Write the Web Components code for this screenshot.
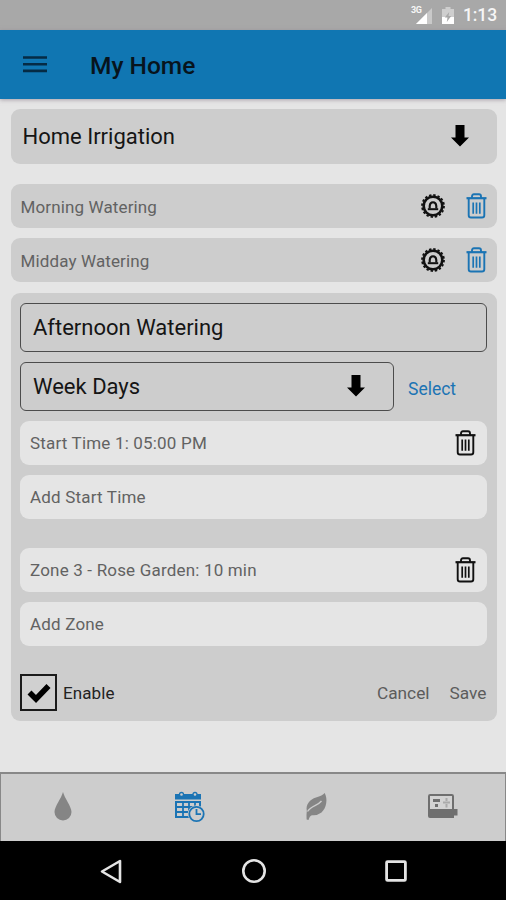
<!DOCTYPE html>
<html lang="en">
<head>
<meta charset="utf-8">
<title>My Home</title>
<style>
html,body{margin:0;height:100%;overflow:hidden}
body{font-family:Roboto,"Liberation Sans",sans-serif;background:#e5e5e5}
</style>
</head>
<body>
<irrigation-app></irrigation-app>
<script>
const define = (name, html, setup) => {
  const t = document.createElement('template');
  t.innerHTML = html;
  customElements.define(name, class extends HTMLElement {
    constructor() {
      super();
      this.attachShadow({mode: 'open'}).append(t.content.cloneNode(true));
    }
    connectedCallback() { if (setup) setup(this, this.shadowRoot); }
  });
};

const icons = {
  menu: [24, 17, '<path d="M0 1.5h24M0 8.2h24M0 14.9h24" stroke="currentColor" stroke-width="2.6"/>'],
  down: [18, 22, '<path d="M4.5 0h9v12.500H18L9 21.5 0 12.500h4.500z" fill="currentColor"/>'],
  trash: [21, 26, '<g fill="none" stroke="currentColor"><path d="M0.5 5.2h20" stroke-width="2.2"/><path d="M6 5V3.4Q6 1.3 8 1.3h5q2 0 2 2.1V5M2.7 6v16.200q0 2.300 2.300 2.300h11q2.300 0 2.300-2.300V6" stroke-width="1.9"/><path d="M7.200 9.500v11.200M10.500 9.500v11.200M13.800 9.500v11.200" stroke-width="1.7"/></g>'],
  gear: [24, 24, '<g fill="none" stroke="currentColor"><circle cx="12" cy="12" r="9.300" stroke-width="2.600"/><circle cx="12" cy="12" r="11" stroke-width="1.800" stroke-dasharray="2.400 1.916"/><path d="M8.700 14.500V12Q9 8.300 12 8.300T15.300 12V14.500" stroke-width="2.100"/><path d="M6.800 15.200h10.400" stroke-width="2"/></g>'],
  drop: [18, 29, '<path d="M9 0C10.500 6 17.500 14.500 17.500 20a8.500 8.500 0 0 1-17 0C.5 14.500 7.500 6 9 0z" fill="currentColor"/>'],
  calendar: [30, 30, '<path d="M0 2h26v5.500H0zM0 9h26v7h-2v-5H2v13h12v2H0z" fill="currentColor"/><path d="M8 10v15M14 10v15M20 10v6M1 15h22M1 20h14" stroke="currentColor" stroke-width="1.800"/><g fill="#cdcdcd" stroke="currentColor" stroke-width="1.300"><circle cx="6.500" cy="2.500" r="2"/><circle cx="20" cy="2.500" r="2"/></g><circle cx="21.500" cy="22" r="8.700" fill="#cdcdcd"/><circle cx="21.500" cy="22" r="7.200" fill="#cdcdcd" stroke="currentColor" stroke-width="1.800"/><path d="M21.500 17v5.200H26" fill="none" stroke="currentColor" stroke-width="1.800"/>'],
  leaf: [21, 27, '<path d="M.8 18C-.5 11 4 6.500 10 4.500Q16.500 2.500 18.700 0C22 6 20.500 15 15.500 19.500Q11 22.800 6 22.200Q3.500 23 2.500 27L.6 26.500Q.3 22 .8 18z" fill="currentColor"/><path d="M1.500 18.500C5 12.500 11.500 13 15.500 8" fill="none" stroke="#cdcdcd" stroke-width="1.300"/>'],
  controller: [30, 25, '<path d="M2.200 0h21.600Q26 0 26 2.200V15h3.500v6.500H26V24H2Q0 24 0 22V2.200Q0 0 2.200 0z" fill="currentColor"/><path d="M2 2h22v13H2z" fill="#d3d3d3"/><path d="M5 5h7v3H5zM7 10h3v3H7z" fill="currentColor"/><path d="M18.500 4v3M18.500 10v3.500M15 8.500h7" stroke="#aaa" stroke-width="2"/>'],
  signal: [21, 17, '<path d="M21 1v16H5z" fill="#c9c9c9"/><path d="M16 6V17H5z" fill="#fff"/>'],
  battery: [12, 17, '<path d="M3.500 0h5v2H12v15H0V2h3.500z" fill="#cecece"/><path d="M0 10h12v7H0z" fill="#fff"/><path d="M7.200 5L2.800 10.500h2.700l-.7 4.500L9.200 9H6.500z" fill="#a8a8a8"/>'],
  check: [24, 20, '<path d="M2.500 9.500L9 16 21.500 3" fill="none" stroke="currentColor" stroke-width="5.600"/>'],
  back: [22, 25, '<path d="M20 2v21L2 12.500z" fill="none" stroke="#e4e4e4" stroke-width="2.600" stroke-linejoin="round"/>'],
  home: [24, 24, '<circle cx="12" cy="12" r="10.700" fill="none" stroke="#e4e4e4" stroke-width="2.600"/>'],
  recent: [22, 22, '<rect x="1.600" y="1.600" width="18.800" height="18.800" rx="1" fill="none" stroke="#e4e4e4" stroke-width="2.800"/>']
};
define('ui-icon', '<style>:host{display:block;flex:none;line-height:0}svg{display:block;overflow:visible}</style><div></div>', (el, r) => {
  const [w, h, d] = icons[el.getAttribute('name')];
  r.querySelector('div').innerHTML = `<svg width="${w}" height="${h}" viewBox="0 0 ${w} ${h}">${d}</svg>`;
});

define('status-bar', `<style>
:host{display:flex;height:30px;background:#a8a8a8;color:#f6f6f6;align-items:center;justify-content:flex-end;box-sizing:border-box;padding:1px 9px 0 0}
.net{position:relative;margin-right:10px}
.net span{position:absolute;left:0;top:-2px;font:bold 9px/10px Roboto,sans-serif;letter-spacing:-.3px}
time{font:500 17.500px/29px Roboto,sans-serif;letter-spacing:-.1px;margin-left:9px}
</style><div class="net"><ui-icon name="signal"></ui-icon><span>3G</span></div><ui-icon name="battery"></ui-icon><time>1:13</time>`);

define('app-bar', `<style>
:host{display:flex;height:69px;background:#1076b2;color:#07141d;align-items:center;padding-left:23px;gap:43px;box-shadow:0 1px 4px #8c7f8caa;position:relative}
ui-icon{color:#052b45}
h1{margin:0;padding-top:3px;font-size:24.500px;line-height:30px;font-weight:500}
</style><ui-icon name="menu"></ui-icon><h1><slot></slot></h1>`);

define('list-row', `<style>
:host{display:flex;align-items:center;box-sizing:border-box;height:44px;border-radius:9px;background:#cdcdcd;color:#626262;padding:1px 10px 0 10px;font-size:17px;letter-spacing:.13px}
:host([light]){background:#e5e5e5;padding:0 11px 0 10px;letter-spacing:.18px}
.t{flex:1;white-space:nowrap;line-height:24px}
</style><div class="t"><slot></slot></div><slot name="actions"></slot>`);

define('select-field', `<style>
:host{display:flex;align-items:center;box-sizing:border-box;height:55px;border-radius:9px;background:#cdcdcd;color:#151515;padding:0 28px 0 12px;font-size:22px}
:host([outlined]){height:49px;border:1.500px solid #4c4c4c;border-radius:6px;background:none}
.t{flex:1;white-space:nowrap;line-height:28px;padding-top:1px}
ui-icon{color:#000;margin-bottom:2px}
:host([outlined]) ui-icon{margin-bottom:1px}
:host([plain]) ui-icon{display:none}
</style><div class="t"><slot></slot></div><ui-icon name="down"></ui-icon>`);

define('check-box', `<style>
:host{display:flex;align-items:center;gap:6px;color:#222;font-size:17px;letter-spacing:.1px}
.b{box-sizing:border-box;width:37px;height:37px;border:2.500px solid #1b1b1b;display:grid;place-items:center;background:#d0d0d0;color:#000}
span{padding-top:1px}
</style><div class="b"><ui-icon name="check"></ui-icon></div><span><slot></slot></span>`);

define('schedule-editor', `<style>
:host{display:flex;flex-direction:column;box-sizing:border-box;height:427.500px;border-radius:9px;background:#cdcdcd;padding:10px 10px 9.500px 9.500px}
.days{display:flex;align-items:center;margin:10px 0 10px}
.days select-field{width:374px}
.link{color:#1b74b4;font-size:17.500px;margin:4px 0 0 14px}
list-row+list-row{margin-top:9.800px}
list-row.group{margin-top:29px}
ui-icon{color:#111}
.foot{display:flex;align-items:center;margin-top:auto;color:#5c5c5c;font-size:17.300px}
.foot check-box{margin-right:auto}
.foot>span{padding-top:1px}
.foot span+span{margin-left:20px}
</style>
<select-field outlined plain>Afternoon Watering</select-field>
<div class="days"><select-field outlined>Week Days</select-field><span class="link">Select</span></div>
<list-row light>Start Time 1: 05:00 PM<ui-icon slot="actions" name="trash"></ui-icon></list-row>
<list-row light>Add Start Time</list-row>
<list-row light class="group">Zone 3 - Rose Garden: 10 min<ui-icon slot="actions" name="trash"></ui-icon></list-row>
<list-row light>Add Zone</list-row>
<div class="foot"><check-box>Enable</check-box><span>Cancel</span><span>Save</span></div>`);

define('tab-bar', `<style>
:host{display:grid;grid-template-columns:repeat(4,1fr);height:69px;box-sizing:border-box;background:#cdcdcd;box-shadow:inset 0 1px 0 1px #888;place-items:center;color:#858585}
.on{color:#1b74b4}
.c{color:#6f6f6f}
</style><ui-icon name="drop"></ui-icon><ui-icon class="on" name="calendar"></ui-icon><ui-icon name="leaf"></ui-icon><ui-icon class="c" name="controller"></ui-icon>`);

define('nav-bar', `<style>
:host{display:flex;height:59px;box-sizing:border-box;background:#000;align-items:center;justify-content:space-between;padding:1px 99px 0 100px}
</style><ui-icon name="back"></ui-icon><ui-icon name="home"></ui-icon><ui-icon name="recent"></ui-icon>`);

define('irrigation-app', `<style>
:host{display:flex;flex-direction:column;width:506px;height:900px;background:#e5e5e5}
main{flex:1;min-height:0;box-sizing:border-box;padding:10px 9.500px 0 10.500px;display:flex;flex-direction:column}
select-field{margin-bottom:20px;flex:none}
main>list-row{margin-bottom:10px;flex:none}
.a{display:flex;gap:21px;align-items:center;color:#111;margin-bottom:1px}
.a ui-icon+ui-icon{color:#1b74b4}
schedule-editor{flex:none;margin-top:1px}
</style>
<status-bar></status-bar>
<app-bar>My Home</app-bar>
<main>
<select-field>Home Irrigation</select-field>
<list-row>Morning Watering<div class="a" slot="actions"><ui-icon name="gear"></ui-icon><ui-icon name="trash"></ui-icon></div></list-row>
<list-row>Midday Watering<div class="a" slot="actions"><ui-icon name="gear"></ui-icon><ui-icon name="trash"></ui-icon></div></list-row>
<schedule-editor></schedule-editor>
</main>
<tab-bar></tab-bar>
<nav-bar></nav-bar>`);
</script>
</body>
</html>
